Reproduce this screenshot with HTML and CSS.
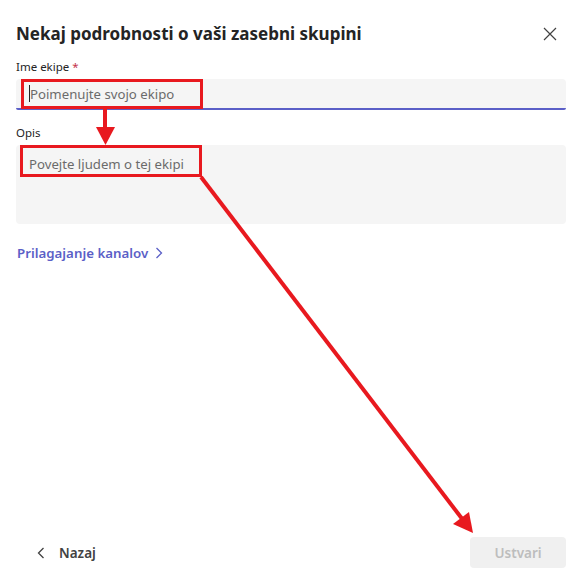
FILE: index.html
```html
<!DOCTYPE html>
<html lang="sl">
<head>
<meta charset="utf-8">
<title>Nekaj podrobnosti o vaši zasebni skupini</title>
<link rel="stylesheet" href="styles.css">
</head>
<body>
<div class="dialog">
  <div class="header">
    <h1 class="title">Nekaj podrobnosti o vaši zasebni skupini</h1>
    <button class="close" aria-label="Zapri">
      <svg width="14" height="14" viewBox="0 0 14 14"><path d="M1 1 L13 13 M13 1 L1 13" stroke="#424242" stroke-width="1.2" fill="none"/></svg>
    </button>
  </div>

  <div class="label">Ime ekipe <span class="req">*</span></div>
  <div class="input"><span class="caret"></span><span class="ph">Poimenujte svojo ekipo</span></div>

  <div class="label label-2">Opis</div>
  <div class="textarea"><span class="ph">Povejte ljudem o tej ekipi</span></div>

  <div class="link">Prilagajanje kanalov
    <svg width="8" height="12" viewBox="0 0 8 12"><path d="M1.5 1 L6.5 6 L1.5 11" stroke="#5b5fc7" stroke-width="1.3" fill="none"/></svg>
  </div>

  <div class="footer">
    <div class="back">
      <svg width="8" height="12" viewBox="0 0 8 12"><path d="M6.5 1 L1.5 6 L6.5 11" stroke="#424242" stroke-width="1.3" fill="none"/></svg>
      <span>Nazaj</span>
    </div>
    <button class="create">Ustvari</button>
  </div>

  <svg class="annot" width="584" height="580" viewBox="0 0 584 580">
    <rect x="22.5" y="80.5" width="179" height="27" fill="none" stroke="#e8191f" stroke-width="3"/>
    <rect x="21.5" y="146.5" width="179" height="29" fill="none" stroke="#e8191f" stroke-width="3"/>
    <line x1="105" y1="108" x2="105" y2="129" stroke="#e8191f" stroke-width="4"/>
    <polygon points="96,127 115,127 105.5,145" fill="#e8191f"/>
    <line x1="201" y1="177" x2="463" y2="520" stroke="#e8191f" stroke-width="4"/>
    <polygon points="453,524 469,512 473,533" fill="#e8191f"/>
  </svg>
</div>
</body>
</html>
```
FILE: styles.css
```css
html, body {
  margin: 0;
  padding: 0;
  background: #ffffff;
}
body {
  font-family: "Noto Sans", "Open Sans", sans-serif;
  color: #242424;
}
.dialog {
  position: relative;
  width: 584px;
  height: 580px;
  box-sizing: border-box;
  padding: 22px 18px 12px 16px;
  display: flex;
  flex-direction: column;
}
.header {
  display: flex;
  justify-content: space-between;
  align-items: center;
  height: 24px;
}
.title {
  margin: 0;
  font-size: 17px;
  font-weight: 700;
  line-height: 24px;
  color: #242424;
}
.close {
  border: 0;
  background: none;
  padding: 0;
  width: 14px;
  height: 14px;
  margin-right: 9px;
  display: flex;
}
.label {
  margin-top: 13px;
  font-size: 11.5px;
  line-height: 16px;
  color: #242424;
}
.label-2 {
  margin-top: 15px;
}
.req {
  color: #c4314b;
}
.input {
  margin-top: 4px;
  height: 31px;
  box-sizing: border-box;
  background: #f5f5f5;
  border-radius: 4px 4px 2px 2px;
  border-bottom: 2px solid #5b5fc7;
  display: flex;
  align-items: center;
  padding-left: 13px;
}
.caret {
  width: 1px;
  height: 17px;
  background: #242424;
}
.ph {
  font-size: 13.2px;
  color: #6b6b6b;
  line-height: 20px;
}
.textarea {
  margin-top: 4px;
  height: 79px;
  box-sizing: border-box;
  background: #f5f5f5;
  border-radius: 4px;
  padding: 7px 13px;
}
.link {
  margin-top: 19px;
  display: flex;
  align-items: center;
  gap: 7px;
  font-size: 13.3px;
  font-weight: 600;
  line-height: 20px;
  color: #5b5fc7;
  padding-left: 1px;
}
.footer {
  margin-top: auto;
  display: flex;
  justify-content: space-between;
  align-items: center;
}
.back {
  display: flex;
  align-items: center;
  gap: 14px;
  padding-left: 21px;
  font-size: 13.5px;
  font-weight: 600;
  color: #424242;
}
.create {
  width: 96px;
  height: 31px;
  border: 0;
  border-radius: 4px;
  background: #f0f0f0;
  color: #bdbdbd;
  font-family: "Noto Sans", "Open Sans", sans-serif;
  font-size: 13.5px;
  font-weight: 600;
}
.annot {
  position: absolute;
  left: 0;
  top: 0;
  pointer-events: none;
}
```
